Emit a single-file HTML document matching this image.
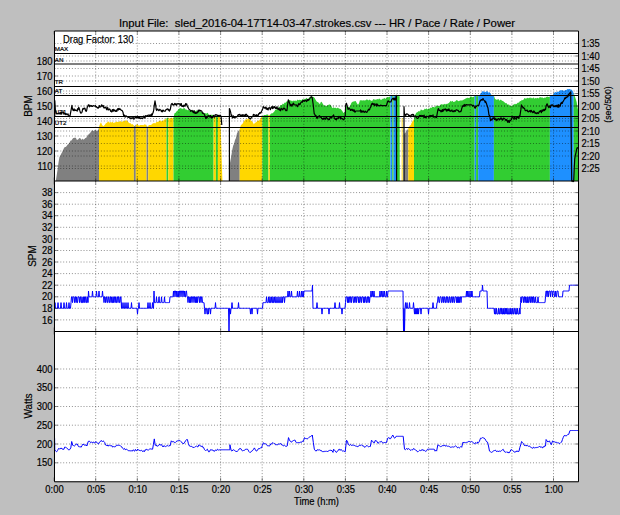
<!DOCTYPE html><html><head><meta charset="utf-8"><style>html,body{margin:0;padding:0;background:#bfbfbf;overflow:hidden}svg{display:block}</style></head><body><svg width="620" height="515" viewBox="0 0 620 515"><rect x="0" y="0" width="620" height="515" fill="#bfbfbf"/><rect x="54.5" y="31.0" width="524.0" height="150.0" fill="#fff"/><rect x="54.5" y="181.0" width="524.0" height="150.0" fill="#fff"/><rect x="54.5" y="331.0" width="524.0" height="150.0" fill="#fff"/><path d="M54.00 181.00 L54.00 181.00 L55.00 181.00 L55.80 181.00 L57.50 170.00 L58.45 163.05 L59.40 157.30 L60.30 155.84 L61.20 153.70 L62.10 152.29 L63.00 150.36 L63.90 148.24 L64.80 147.10 L65.64 146.91 L66.48 146.21 L67.32 144.96 L68.16 144.23 L69.00 143.50 L69.83 142.02 L70.67 140.61 L71.50 140.50 L72.40 139.02 L73.30 138.00 L74.15 137.90 L75.00 137.50 L75.95 137.92 L76.90 139.90 L78.10 139.48 L79.30 138.00 L80.10 138.15 L80.90 138.79 L81.70 139.90 L82.60 138.60 L83.50 139.85 L84.40 138.90 L85.30 138.00 L86.20 137.80 L87.10 136.46 L88.00 134.54 L88.90 134.50 L89.83 133.12 L90.75 132.35 L91.67 130.58 L92.60 130.20 L93.50 131.16 L94.40 130.26 L95.30 130.03 L96.20 130.80 L97.35 130.72 L98.50 129.50 L99.00 127.01 L99.00 181.00Z" fill="#808080"/><path d="M99.00 181.00 L99.00 127.00 L100.00 123.97 L101.00 122.30 L102.15 125.07 L103.30 126.30 L104.10 125.42 L104.90 124.79 L105.70 123.62 L106.50 123.07 L107.30 122.30 L108.10 121.74 L108.90 121.47 L109.70 122.96 L110.50 121.82 L111.30 122.80 L112.10 121.78 L112.90 122.30 L113.78 122.94 L114.65 122.61 L115.53 122.16 L116.40 121.50 L117.30 121.97 L118.20 121.65 L119.10 121.91 L120.00 120.82 L120.90 121.46 L121.80 122.09 L122.70 121.50 L123.50 120.56 L124.30 121.46 L125.10 121.00 L125.90 119.90 L126.97 120.77 L128.03 121.72 L129.10 123.00 L129.90 123.14 L130.70 123.24 L131.50 124.57 L132.30 123.90 L133.40 124.90 L133.90 125.53 L133.90 181.00Z" fill="#ffd700"/><path d="M133.90 181.00 L133.90 125.54 L134.50 126.30 L135.50 124.70 L135.80 124.73 L135.80 181.00Z" fill="#808080"/><path d="M135.80 181.00 L135.80 124.73 L136.50 124.80 L137.40 124.11 L138.30 125.27 L139.20 125.81 L140.10 124.95 L141.00 125.00 L141.83 124.90 L142.67 124.92 L143.50 125.20 L144.33 124.17 L145.17 124.78 L146.00 124.50 L146.60 125.50 L146.60 181.00Z" fill="#ffd700"/><path d="M146.60 181.00 L146.60 125.50 L147.50 127.00 L148.20 126.07 L148.20 181.00Z" fill="#808080"/><path d="M148.20 181.00 L148.20 126.07 L149.00 125.00 L149.80 125.00 L150.60 125.02 L151.40 124.70 L152.36 123.65 L153.32 123.15 L154.28 122.99 L155.24 123.55 L156.20 122.30 L157.10 121.80 L158.00 122.02 L158.90 121.27 L159.80 120.67 L160.70 120.38 L161.60 121.49 L162.50 120.70 L163.30 120.72 L164.10 119.51 L164.90 119.59 L165.70 119.10 L166.50 118.30 L166.50 181.00Z" fill="#ffd700"/><path d="M166.50 181.00 L166.50 118.30 L168.00 117.50 L168.30 117.75 L168.30 181.00Z" fill="#32cd32"/><path d="M168.30 181.00 L168.30 117.76 L169.00 118.35 L170.00 118.59 L171.00 117.90 L171.83 117.60 L172.67 118.51 L173.50 117.50 L173.50 181.00Z" fill="#ffd700"/><path d="M173.50 181.00 L173.50 117.50 L174.50 113.20 L175.44 113.09 L176.38 111.48 L177.32 111.07 L178.26 109.42 L179.20 108.50 L180.15 108.28 L181.10 108.04 L182.05 109.18 L183.00 108.50 L183.93 108.14 L184.85 108.22 L185.77 109.80 L186.70 109.50 L187.63 110.29 L188.57 110.07 L189.50 110.40 L190.44 111.19 L191.38 109.95 L192.32 110.50 L193.26 110.74 L194.20 111.30 L195.01 111.16 L195.83 110.71 L196.64 110.53 L197.46 111.01 L198.27 112.02 L199.09 112.17 L199.90 111.30 L200.83 112.06 L201.77 111.90 L202.70 111.80 L203.63 113.39 L204.57 112.93 L205.50 113.20 L206.33 113.82 L207.17 112.77 L208.00 113.32 L208.83 114.65 L209.67 114.79 L210.50 115.15 L211.33 114.86 L212.17 114.76 L213.00 115.10 L213.60 115.61 L213.60 181.00Z" fill="#32cd32"/><path d="M213.60 181.00 L213.60 115.61 L214.00 115.95 L215.00 116.50 L215.90 116.84 L215.90 181.00Z" fill="#ffd700"/><path d="M215.90 181.00 L215.90 116.84 L216.00 116.88 L217.00 116.00 L217.85 116.15 L217.90 116.21 L217.90 181.00Z" fill="#32cd32"/><path d="M217.90 181.00 L217.90 116.21 L218.70 117.06 L219.55 117.10 L220.40 118.00 L222.40 181.00 L223.00 181.00 L223.00 181.00Z" fill="#ffd700"/><path d="M229.00 181.00 L229.00 181.00 L229.50 181.00 L230.00 163.00 L231.10 156.98 L232.20 150.00 L233.13 145.79 L234.07 143.67 L235.00 140.00 L235.97 137.98 L236.93 133.48 L237.90 131.50 L238.80 130.52 L239.70 129.20 L239.70 181.00Z" fill="#808080"/><path d="M239.70 181.00 L239.70 129.20 L240.70 125.40 L241.62 124.48 L242.55 123.68 L243.47 122.03 L244.40 120.70 L245.35 119.56 L246.30 119.13 L247.25 119.43 L248.20 117.90 L249.13 119.56 L250.07 119.11 L251.00 120.70 L251.97 121.24 L252.93 122.50 L253.90 124.50 L254.83 122.71 L255.77 122.54 L256.70 121.70 L257.62 120.35 L258.55 120.96 L259.47 119.88 L260.40 118.90 L261.35 116.78 L262.30 116.00 L262.30 181.00Z" fill="#ffd700"/><path d="M262.30 181.00 L262.30 116.00 L263.20 115.77 L264.10 115.08 L265.00 115.10 L265.88 115.09 L266.75 114.60 L267.62 114.50 L268.50 115.10 L268.50 181.00Z" fill="#32cd32"/><path d="M268.50 181.00 L268.50 115.10 L269.90 115.01 L269.90 181.00Z" fill="#ffd700"/><path d="M269.90 181.00 L269.90 115.01 L270.00 115.00 L270.90 113.69 L271.80 113.30 L272.70 113.16 L273.60 112.13 L274.50 111.30 L275.38 109.53 L276.25 109.78 L277.12 109.12 L278.00 107.50 L278.80 107.45 L279.60 106.94 L280.40 104.99 L281.20 105.27 L282.00 104.80 L282.84 103.44 L283.69 104.13 L284.53 102.50 L285.37 102.89 L286.21 101.50 L287.06 101.73 L287.90 100.80 L288.74 100.46 L289.59 99.98 L290.43 100.60 L291.27 100.46 L292.11 101.52 L292.96 100.43 L293.80 100.80 L294.66 100.66 L295.51 100.60 L296.37 101.18 L297.23 99.51 L298.09 100.27 L298.94 99.96 L299.80 99.80 L300.64 100.08 L301.49 100.36 L302.33 99.03 L303.17 99.59 L304.01 99.13 L304.86 99.05 L305.70 98.80 L306.56 97.76 L307.43 98.87 L308.29 98.91 L309.15 97.54 L310.01 97.22 L310.88 98.19 L311.74 96.34 L312.60 96.80 L313.60 97.04 L314.60 98.03 L315.60 99.80 L316.48 101.21 L317.36 101.95 L318.24 102.23 L319.12 103.38 L320.00 104.00 L320.80 101.99 L321.60 101.70 L322.75 103.86 L323.90 105.50 L325.05 105.60 L326.20 105.90 L327.18 105.56 L328.15 104.95 L329.12 104.60 L330.10 104.40 L331.25 105.86 L332.40 108.30 L333.32 107.35 L334.23 107.91 L335.15 107.44 L336.07 108.13 L336.98 108.20 L337.90 107.50 L338.85 108.58 L339.80 108.77 L340.75 109.05 L341.70 110.20 L342.50 111.34 L343.30 112.90 L344.25 112.28 L345.20 111.70 L346.40 105.50 L347.20 106.54 L348.00 107.10 L349.15 107.13 L350.30 105.50 L351.45 102.85 L352.60 101.70 L353.63 101.40 L354.67 101.15 L355.70 100.90 L356.85 103.24 L358.00 104.80 L359.00 103.15 L360.00 100.10 L360.84 100.57 L361.69 100.26 L362.53 100.47 L363.38 100.27 L364.22 100.58 L365.07 100.26 L365.91 100.20 L366.76 99.37 L367.60 99.80 L368.40 100.55 L369.20 99.59 L370.00 100.01 L370.80 100.38 L371.60 100.63 L372.40 100.68 L373.20 98.91 L374.00 99.46 L374.80 99.46 L375.60 99.80 L376.48 99.49 L377.36 98.94 L378.23 99.56 L379.11 98.60 L379.99 98.89 L380.87 99.93 L381.74 99.46 L382.62 98.84 L383.50 98.80 L384.34 97.81 L385.19 99.05 L386.03 98.31 L386.87 97.13 L387.71 97.07 L388.56 97.34 L389.40 96.80 L390.20 96.63 L390.40 96.42 L390.40 181.00Z" fill="#32cd32"/><path d="M390.40 181.00 L390.40 96.42 L391.00 95.80 L392.00 95.47 L392.30 95.63 L392.30 181.00Z" fill="#1e90ff"/><path d="M392.30 181.00 L392.30 95.63 L393.00 96.00 L393.60 96.31 L393.60 181.00Z" fill="#32cd32"/><path d="M393.60 181.00 L393.60 96.31 L394.00 96.51 L395.00 95.40 L396.00 95.13 L396.60 95.35 L396.60 181.00Z" fill="#1e90ff"/><path d="M396.60 181.00 L396.60 95.35 L397.00 95.50 L397.87 95.22 L398.73 96.46 L399.60 96.00 L399.80 180.58 L399.80 181.00Z" fill="#32cd32"/><path d="M401.70 181.00 L401.70 118.00 L402.60 118.00 L402.60 181.00Z" fill="#ffd700"/><path d="M404.00 181.00 L404.00 134.50 L404.86 132.66 L405.72 132.39 L406.58 130.30 L407.44 129.80 L408.30 128.40 L408.30 181.00Z" fill="#808080"/><path d="M408.30 181.00 L408.30 128.40 L409.11 126.66 L409.93 125.50 L410.74 125.16 L411.56 122.97 L412.37 121.57 L413.19 120.55 L414.00 119.00 L414.00 181.00Z" fill="#ffd700"/><path d="M414.00 181.00 L414.00 119.00 L414.85 115.96 L415.70 113.70 L416.54 112.54 L417.39 112.35 L418.23 111.58 L419.07 110.85 L419.91 111.67 L420.76 109.43 L421.60 109.70 L422.40 110.16 L423.20 110.28 L424.00 109.77 L424.80 108.43 L425.60 109.20 L426.40 108.27 L427.20 109.19 L428.00 109.26 L428.80 108.33 L429.60 108.70 L430.48 107.48 L431.36 108.11 L432.23 106.97 L433.11 107.02 L433.99 106.95 L434.87 107.41 L435.74 106.13 L436.62 105.38 L437.50 105.70 L438.35 106.04 L439.20 105.90 L440.05 105.18 L440.90 104.13 L441.75 104.19 L442.60 104.39 L443.45 104.46 L444.30 103.69 L445.15 104.53 L446.00 103.80 L446.98 103.92 L447.95 103.57 L448.92 102.99 L449.90 101.80 L450.78 100.82 L451.66 101.73 L452.53 100.71 L453.41 102.07 L454.29 101.69 L455.17 101.60 L456.04 100.46 L456.92 100.12 L457.80 100.80 L458.66 101.22 L459.51 100.71 L460.37 100.59 L461.23 100.18 L462.09 100.63 L462.94 99.65 L463.80 99.80 L464.77 98.89 L465.75 98.54 L466.73 97.94 L467.70 97.80 L468.56 97.89 L469.41 98.22 L470.27 96.60 L471.13 96.45 L471.99 97.11 L472.84 97.26 L473.70 96.80 L474.70 96.03 L474.70 181.00Z" fill="#32cd32"/><path d="M474.70 181.00 L474.70 96.03 L475.00 95.80 L476.00 95.59 L476.10 95.68 L476.10 181.00Z" fill="#1e90ff"/><path d="M476.10 181.00 L476.10 95.68 L477.00 96.50 L477.87 95.85 L478.20 95.62 L478.20 181.00Z" fill="#32cd32"/><path d="M478.20 181.00 L478.20 95.62 L478.73 95.24 L479.60 95.80 L480.60 93.33 L481.60 92.52 L482.60 90.90 L483.60 91.56 L484.60 91.84 L485.60 91.90 L486.58 91.28 L487.55 91.19 L488.52 92.68 L489.50 91.90 L490.50 93.47 L491.50 94.90 L492.70 95.19 L493.90 95.80 L493.90 181.00Z" fill="#1e90ff"/><path d="M493.90 181.00 L493.90 95.80 L495.00 98.80 L495.88 99.39 L496.75 99.71 L497.62 99.59 L498.50 99.04 L499.38 100.64 L500.25 99.78 L501.12 99.72 L502.00 100.80 L502.95 101.03 L503.90 101.80 L504.76 102.42 L505.61 103.15 L506.47 102.88 L507.33 104.41 L508.19 104.57 L509.04 104.53 L509.90 105.70 L510.74 106.06 L511.59 105.71 L512.43 105.62 L513.27 104.94 L514.11 103.83 L514.96 104.57 L515.80 103.80 L516.66 103.95 L517.51 102.72 L518.37 102.82 L519.23 102.36 L520.09 100.75 L520.94 101.17 L521.80 99.80 L522.64 100.30 L523.49 99.76 L524.33 98.06 L525.17 98.39 L526.01 98.58 L526.86 98.28 L527.70 97.80 L528.53 98.26 L529.35 98.06 L530.18 97.19 L531.00 98.58 L531.83 97.87 L532.65 98.49 L533.48 97.27 L534.30 98.70 L535.12 97.90 L535.95 98.30 L536.77 98.23 L537.60 97.80 L538.48 98.49 L539.36 97.55 L540.23 97.05 L541.11 97.63 L541.99 97.22 L542.87 97.87 L543.74 98.37 L544.62 97.55 L545.50 97.80 L546.38 96.88 L547.26 96.43 L548.14 96.88 L549.02 96.90 L549.90 96.50 L549.90 181.00Z" fill="#32cd32"/><path d="M549.90 181.00 L549.90 96.50 L550.90 95.30 L551.90 95.80 L552.88 95.12 L553.85 93.33 L554.82 92.17 L555.80 91.90 L556.60 92.47 L557.40 91.54 L558.20 92.01 L559.00 91.13 L559.80 90.90 L560.64 90.08 L561.49 90.15 L562.33 90.34 L563.17 90.58 L564.01 90.67 L564.86 90.50 L565.70 89.90 L566.50 89.97 L567.30 89.06 L568.10 89.17 L568.90 88.88 L569.70 88.90 L570.70 89.55 L571.70 89.81 L572.70 90.90 L573.70 93.21 L573.70 181.00Z" fill="#1e90ff"/><path d="M573.70 181.00 L573.70 93.21 L574.00 93.90 L574.87 96.60 L575.73 99.09 L576.60 101.80 L578.00 109.99 L578.00 181.00Z" fill="#32cd32"/><path d="M95.7 31.0V181.0 M95.7 181.0V331.0 M95.7 331.0V481.0 M137.3 31.0V181.0 M137.3 181.0V331.0 M137.3 331.0V481.0 M178.9 31.0V181.0 M178.9 181.0V331.0 M178.9 331.0V481.0 M220.6 31.0V181.0 M220.6 181.0V331.0 M220.6 331.0V481.0 M262.2 31.0V181.0 M262.2 181.0V331.0 M262.2 331.0V481.0 M303.8 31.0V181.0 M303.8 181.0V331.0 M303.8 331.0V481.0 M345.4 31.0V181.0 M345.4 181.0V331.0 M345.4 331.0V481.0 M387.0 31.0V181.0 M387.0 181.0V331.0 M387.0 331.0V481.0 M428.6 31.0V181.0 M428.6 181.0V331.0 M428.6 331.0V481.0 M470.3 31.0V181.0 M470.3 181.0V331.0 M470.3 331.0V481.0 M511.9 31.0V181.0 M511.9 181.0V331.0 M511.9 331.0V481.0 M553.5 31.0V181.0 M553.5 181.0V331.0 M553.5 331.0V481.0 M54.5 166.0H578.5 M54.5 151.0H578.5 M54.5 136.0H578.5 M54.5 121.0H578.5 M54.5 106.0H578.5 M54.5 91.0H578.5 M54.5 76.0H578.5 M54.5 61.0H578.5 M54.5 43.5H578.5 M54.5 56.0H578.5 M54.5 68.5H578.5 M54.5 81.0H578.5 M54.5 93.5H578.5 M54.5 106.0H578.5 M54.5 118.5H578.5 M54.5 131.0H578.5 M54.5 143.5H578.5 M54.5 156.0H578.5 M54.5 168.5H578.5 M54.5 319.9H578.5 M54.5 308.3H578.5 M54.5 296.8H578.5 M54.5 285.2H578.5 M54.5 273.6H578.5 M54.5 262.0H578.5 M54.5 250.5H578.5 M54.5 238.9H578.5 M54.5 227.3H578.5 M54.5 215.7H578.5 M54.5 204.2H578.5 M54.5 192.6H578.5 M54.5 462.8H578.5 M54.5 444.0H578.5 M54.5 425.2H578.5 M54.5 406.5H578.5 M54.5 387.8H578.5 M54.5 369.0H578.5" stroke="#000" stroke-opacity="0.55" stroke-width="0.8" stroke-dasharray="1 1.9" fill="none"/><path d="M54.5 53.5H578.5 M54.5 64.0H578.5 M54.5 86.5H578.5 M54.5 95.5H578.5 M54.5 116.5H578.5 M54.5 127.5H578.5" stroke="#000" stroke-width="1" fill="none"/><g font-family='"Liberation Sans", sans-serif' font-size="6.2" fill="#000" stroke="#000" stroke-width="0.2"><text x="54.8" y="51.3">MAX</text><text x="54.8" y="61.8">AN</text><text x="54.8" y="84.3">TR</text><text x="54.8" y="93.3">AT</text><text x="54.8" y="114.3">UT1</text><text x="54.8" y="125.3">UT2</text></g><path d="M54.8 117.0 L54.8 100.5 L55.4 110.2 L55.9 110.8 L56.4 112.9 L56.9 114.1 L57.5 113.4 L58.2 113.8 L58.8 113.2 L59.4 113.9 L60.1 112.6 L60.7 114.1 L61.2 112.3 L61.7 114.1 L62.2 112.0 L62.7 112.2 L63.3 111.8 L64.0 114.3 L64.6 113.2 L65.1 113.3 L65.6 114.6 L66.1 113.8 L66.6 114.1 L67.2 114.8 L67.9 113.8 L68.5 115.1 L69.0 115.8 L69.5 116.7 L70.0 116.0 L70.7 112.2 L71.4 108.3 L71.9 105.4 L72.4 108.5 L72.9 110.2 L73.5 110.6 L74.1 108.8 L74.7 110.6 L75.3 109.8 L75.9 110.5 L76.6 110.2 L77.2 111.2 L77.7 108.6 L78.2 109.6 L78.7 107.3 L79.3 108.7 L79.9 110.9 L80.5 112.8 L81.1 113.2 L81.6 112.6 L82.1 111.9 L82.6 109.2 L83.1 108.3 L83.7 109.1 L84.4 108.1 L85.0 108.3 L85.5 110.5 L86.0 111.3 L86.5 111.2 L87.2 107.4 L87.9 105.9 L88.4 104.8 L88.9 104.9 L89.4 106.8 L89.9 105.4 L90.4 105.5 L91.0 106.3 L91.5 105.6 L92.0 106.4 L92.6 106.3 L93.1 105.8 L93.7 105.6 L94.3 106.1 L94.8 106.0 L95.4 105.6 L95.9 107.0 L96.5 106.6 L97.0 107.6 L97.5 107.7 L98.1 108.3 L98.6 107.2 L99.1 107.3 L99.6 105.5 L100.2 107.0 L100.7 106.9 L101.2 106.3 L101.7 104.8 L102.2 105.5 L102.8 106.5 L103.3 105.6 L103.8 107.9 L104.4 107.7 L104.9 108.0 L105.4 107.5 L106.0 107.0 L106.5 109.4 L107.0 109.9 L107.6 107.5 L108.1 108.8 L108.6 110.0 L109.2 109.3 L109.7 109.0 L110.2 109.8 L110.8 111.5 L111.3 111.1 L111.8 112.0 L112.3 109.6 L112.8 111.1 L113.3 109.4 L113.8 111.1 L114.3 109.9 L114.8 110.3 L115.3 111.3 L115.8 111.5 L116.4 110.0 L116.9 111.3 L117.4 109.3 L117.9 108.6 L118.5 110.0 L119.0 108.3 L119.5 109.5 L120.1 108.9 L120.7 109.6 L121.3 110.4 L121.9 110.3 L122.4 110.9 L123.0 112.2 L123.5 115.1 L124.0 116.3 L124.5 115.0 L125.0 117.0 L125.5 117.0 L126.0 115.8 L126.5 116.2 L127.0 116.6 L127.5 116.7 L128.0 117.3 L128.6 117.3 L129.1 117.4 L129.6 117.7 L130.2 118.8 L130.7 117.8 L131.2 117.8 L131.8 118.7 L132.3 118.3 L132.8 117.5 L133.4 117.6 L133.9 119.4 L134.4 118.0 L135.0 118.0 L135.5 116.4 L136.0 117.4 L136.6 117.8 L137.1 117.5 L137.6 116.2 L138.1 118.0 L138.7 118.1 L139.2 116.6 L139.7 118.3 L140.2 117.9 L140.8 118.6 L141.3 117.8 L141.8 118.3 L142.3 118.6 L142.9 118.4 L143.4 116.2 L143.9 116.0 L144.5 117.5 L145.0 118.0 L145.5 115.7 L146.1 116.0 L146.6 115.9 L147.1 116.1 L147.6 115.3 L148.1 115.3 L148.6 115.1 L149.1 115.2 L149.7 115.7 L150.2 114.8 L150.7 115.0 L151.2 116.0 L151.7 113.8 L152.2 115.1 L152.7 113.4 L153.3 112.0 L153.8 109.5 L154.4 104.6 L155.0 100.8 L155.6 104.4 L156.2 109.5 L156.7 110.5 L157.2 109.0 L157.8 109.0 L158.3 109.9 L158.8 110.7 L159.3 110.3 L159.8 109.3 L160.4 110.0 L160.9 110.1 L161.4 111.6 L162.0 110.6 L162.5 111.8 L163.0 110.0 L163.6 110.6 L164.1 111.1 L164.7 111.0 L165.4 111.1 L166.0 109.5 L166.5 109.5 L167.1 109.0 L167.6 108.8 L168.2 110.1 L168.7 109.3 L169.3 111.1 L169.8 110.4 L170.4 109.1 L171.0 105.1 L171.6 103.8 L172.1 103.3 L172.7 104.9 L173.2 104.6 L173.8 105.2 L174.3 104.0 L174.9 103.5 L175.4 104.7 L175.9 104.0 L176.5 105.3 L177.0 103.7 L177.6 103.8 L178.1 103.8 L178.7 103.7 L179.2 103.8 L179.7 103.8 L180.3 105.5 L180.8 103.7 L181.3 103.5 L181.8 106.4 L182.4 106.5 L182.9 105.7 L183.4 106.8 L184.0 105.0 L184.5 106.1 L185.1 105.8 L185.6 103.6 L186.2 104.8 L186.7 103.8 L187.3 106.3 L188.0 107.4 L188.6 108.5 L189.2 109.5 L189.9 109.8 L190.5 111.3 L191.0 110.9 L191.5 110.7 L192.0 110.4 L192.5 111.9 L193.0 111.2 L193.6 112.7 L194.1 110.7 L194.6 113.2 L195.1 112.7 L195.6 113.4 L196.1 112.3 L196.6 113.2 L197.1 113.0 L197.7 111.9 L198.2 110.1 L198.7 111.9 L199.2 110.1 L199.8 110.3 L200.3 111.1 L200.8 110.4 L201.4 111.0 L201.9 111.3 L202.5 113.3 L203.0 113.0 L203.6 113.2 L204.2 114.3 L204.9 115.6 L205.5 117.9 L206.0 118.6 L206.6 117.3 L207.1 117.9 L207.7 116.4 L208.2 115.7 L208.8 116.4 L209.3 116.0 L209.8 117.0 L210.4 115.4 L210.9 117.2 L211.4 117.8 L211.9 117.6 L212.5 117.8 L213.0 117.0 L213.5 115.3 L214.1 116.8 L214.6 117.2 L215.2 114.7 L215.7 115.0 L216.3 114.7 L216.8 115.1 L217.4 115.4 L217.9 115.2 L218.5 115.6 L219.0 116.6 L219.6 116.0 L220.1 115.1 L220.7 115.8 L221.2 117.5 L221.8 125.0 M229.4 181.0 L229.4 108.5 L230.0 110.0 L230.7 112.4 L231.3 116.0 L231.8 115.1 L232.4 117.9 L232.9 117.8 L233.4 115.9 L233.9 117.4 L234.5 117.1 L235.0 117.9 L235.5 117.0 L236.1 116.7 L236.6 117.1 L237.2 116.5 L237.7 115.5 L238.3 114.6 L238.8 115.1 L239.3 114.7 L239.9 114.3 L240.4 115.6 L241.0 116.2 L241.5 115.4 L242.1 114.7 L242.6 116.0 L243.1 114.8 L243.7 115.1 L244.2 115.5 L244.7 115.8 L245.2 114.4 L245.8 115.3 L246.3 114.2 L246.8 115.2 L247.4 115.4 L247.9 115.9 L248.5 116.9 L249.0 118.1 L249.6 118.0 L250.1 118.9 L250.6 118.9 L251.2 117.7 L251.7 116.6 L252.3 116.8 L252.8 116.7 L253.4 114.4 L253.9 115.1 L254.4 114.9 L255.0 114.9 L255.5 116.2 L256.0 116.3 L256.5 114.7 L257.1 116.2 L257.6 115.1 L258.2 115.5 L258.7 113.7 L259.3 113.9 L259.8 112.5 L260.4 113.2 L261.0 112.8 L261.6 111.0 L262.1 110.3 L262.7 108.7 L263.3 106.6 L263.8 107.5 L264.4 108.1 L264.9 108.0 L265.4 107.1 L265.9 108.9 L266.5 107.7 L267.0 109.5 L267.5 108.4 L268.1 110.0 L268.6 107.8 L269.2 107.8 L269.7 107.7 L270.3 109.7 L270.8 108.5 L271.3 107.3 L271.9 106.6 L272.4 108.6 L272.9 106.4 L273.4 108.1 L274.0 107.4 L274.5 106.6 L275.0 107.8 L275.5 108.4 L276.0 107.7 L276.5 108.6 L277.0 106.7 L277.5 109.0 L278.0 108.6 L278.5 109.5 L279.0 108.0 L279.5 110.1 L280.0 109.7 L280.6 110.8 L281.1 108.2 L281.7 108.8 L282.2 109.3 L282.8 109.9 L283.3 108.1 L283.9 108.7 L284.4 108.1 L284.9 108.7 L285.4 110.0 L285.9 110.7 L286.4 110.1 L286.9 110.7 L287.6 104.9 L288.3 99.8 L288.8 101.0 L289.3 102.3 L289.8 104.0 L290.3 105.7 L290.8 104.3 L291.3 105.2 L291.8 106.2 L292.3 104.4 L292.8 105.0 L293.3 103.1 L293.8 103.8 L294.3 104.6 L294.8 105.0 L295.3 105.0 L295.8 104.8 L296.3 104.9 L296.8 105.6 L297.3 106.6 L297.8 105.7 L298.4 104.2 L298.9 103.5 L299.5 104.7 L300.0 104.6 L300.6 103.0 L301.1 102.2 L301.7 101.8 L302.2 102.3 L302.7 100.7 L303.2 100.8 L303.7 100.5 L304.2 101.4 L304.7 100.5 L305.2 100.2 L305.7 100.8 L306.2 101.1 L306.7 101.6 L307.2 99.5 L307.7 100.4 L308.2 99.3 L308.7 100.3 L309.2 99.3 L309.7 98.8 L310.2 97.9 L310.7 97.4 L311.2 96.6 L311.7 97.6 L312.2 97.4 L312.7 101.1 L313.2 104.6 L313.7 109.2 L314.2 113.7 L314.8 114.2 L315.4 116.4 L316.0 115.6 L316.6 117.6 L317.1 118.6 L317.6 116.9 L318.1 116.9 L318.6 116.2 L319.1 116.9 L319.6 115.6 L320.1 117.1 L320.7 117.0 L321.2 117.4 L321.8 118.7 L322.3 118.7 L322.9 119.5 L323.5 118.1 L324.1 118.8 L324.7 118.0 L325.2 119.4 L325.7 118.1 L326.2 117.6 L326.8 117.7 L327.3 119.2 L327.8 118.7 L328.4 119.1 L328.9 119.8 L329.5 119.4 L330.0 117.6 L330.6 117.3 L331.1 117.4 L331.7 118.0 L332.3 116.1 L333.0 116.5 L333.6 114.9 L334.2 117.4 L334.9 119.1 L335.5 119.5 L336.1 118.5 L336.6 119.9 L337.2 118.0 L337.7 118.0 L338.3 118.5 L338.8 116.4 L339.4 117.2 L340.0 116.4 L340.5 118.9 L341.1 117.7 L341.7 118.7 L342.3 118.5 L342.9 119.3 L343.5 119.8 L344.1 119.5 L344.6 116.6 L345.2 116.4 L345.6 105.5 L346.4 103.2 L346.9 104.8 L347.5 107.2 L348.0 109.4 L348.5 109.1 L349.0 108.1 L349.5 108.6 L350.0 109.2 L350.5 110.5 L351.1 109.3 L351.6 110.1 L352.1 109.2 L352.6 110.6 L353.1 110.0 L353.6 111.2 L354.1 109.7 L354.7 112.0 L355.2 112.1 L355.7 111.0 L356.2 111.0 L356.8 111.0 L357.3 111.0 L357.9 111.0 L358.4 111.0 L358.9 111.0 L359.5 111.0 L360.0 111.0 L360.5 109.9 L361.0 112.4 L361.6 110.8 L362.1 112.0 L362.6 112.0 L363.1 110.8 L363.6 111.9 L364.1 111.9 L364.7 112.4 L365.2 111.0 L365.7 111.7 L366.3 112.1 L366.8 112.4 L367.4 111.3 L367.9 110.7 L368.5 109.2 L369.0 110.0 L369.6 109.7 L370.1 107.8 L370.6 107.4 L371.1 105.8 L371.6 103.8 L372.1 104.1 L372.6 103.2 L373.1 104.6 L373.6 104.7 L374.1 103.5 L374.6 105.6 L375.1 105.1 L375.6 104.8 L376.1 103.8 L376.7 106.2 L377.2 104.0 L377.7 104.7 L378.3 105.8 L378.8 105.6 L379.4 105.5 L379.9 105.9 L380.4 105.4 L381.0 105.1 L381.5 105.7 L382.0 105.7 L382.5 105.7 L383.0 105.7 L383.5 105.7 L384.0 105.7 L384.5 105.7 L385.0 105.7 L385.5 105.7 L386.0 105.7 L386.5 105.7 L387.1 103.2 L387.8 101.2 L388.4 100.8 L388.9 101.7 L389.4 102.1 L389.9 101.8 L390.4 102.0 L391.0 101.9 L391.5 100.1 L392.1 99.1 L392.6 98.6 L393.2 98.2 L393.8 99.9 L394.5 98.2 L395.1 100.1 L395.8 97.8 L396.4 95.4 L396.6 181.0 M404.0 181.0 L404.0 106.7 L404.5 115.2 L405.1 114.3 L405.7 115.6 L406.2 114.2 L406.8 113.9 L407.4 114.2 L408.0 114.3 L408.5 115.1 L409.1 116.1 L409.6 115.3 L410.2 116.1 L410.8 116.9 L411.3 114.7 L411.9 114.9 L412.4 114.3 L413.0 115.2 L413.5 114.5 L414.1 116.8 L414.6 117.0 L415.2 115.9 L415.7 116.3 L416.3 117.4 L416.8 118.0 L417.3 118.4 L417.9 118.3 L418.4 117.7 L418.9 117.0 L419.5 115.4 L420.0 116.1 L420.5 115.9 L421.0 115.3 L421.5 116.3 L422.0 116.5 L422.5 115.5 L423.1 115.7 L423.6 117.2 L424.1 115.1 L424.6 117.4 L425.1 117.6 L425.6 116.6 L426.1 117.8 L426.7 116.1 L427.2 116.5 L427.7 116.5 L428.3 116.5 L428.8 117.4 L429.4 116.5 L429.9 115.3 L430.4 116.8 L431.0 115.6 L431.5 115.6 L432.0 116.1 L432.5 116.6 L433.0 114.8 L433.5 117.2 L434.0 117.1 L434.5 116.8 L435.0 117.1 L435.5 117.1 L436.0 116.5 L436.5 117.6 L437.2 113.7 L437.9 109.7 L438.4 108.5 L438.9 110.0 L439.4 110.5 L439.9 110.1 L440.4 110.6 L440.9 111.8 L441.4 110.7 L441.9 111.7 L442.4 109.5 L442.9 111.3 L443.4 110.7 L443.9 109.1 L444.4 109.8 L444.9 109.4 L445.4 108.9 L445.9 110.1 L446.4 111.1 L446.9 109.4 L447.4 110.8 L447.9 109.7 L448.4 110.3 L448.9 108.8 L449.4 111.0 L449.9 110.3 L450.4 111.3 L450.9 110.8 L451.4 111.0 L451.9 109.9 L452.4 111.3 L452.9 111.7 L453.4 111.6 L453.9 110.7 L454.4 110.6 L455.0 111.6 L455.5 110.9 L456.0 109.9 L456.6 109.8 L457.1 110.0 L457.6 110.4 L458.1 110.4 L458.7 111.4 L459.2 112.0 L459.7 111.7 L460.3 111.4 L460.8 111.7 L461.3 110.6 L461.8 108.2 L462.3 107.1 L462.8 105.7 L463.3 106.3 L463.8 105.2 L464.3 104.5 L464.8 106.4 L465.3 105.8 L465.8 104.7 L466.3 104.6 L466.8 104.8 L467.3 104.8 L467.9 104.8 L468.4 104.8 L469.0 104.8 L469.5 104.8 L470.1 104.8 L470.6 104.8 L471.2 104.8 L471.7 104.8 L472.2 105.4 L472.7 106.0 L473.2 105.5 L473.7 105.3 L474.2 106.4 L474.7 107.7 L475.3 108.2 L475.8 106.1 L476.4 106.7 L476.9 105.7 L477.5 105.5 L478.0 105.1 L478.6 105.7 L479.1 104.2 L479.6 102.3 L480.1 100.7 L480.6 100.8 L481.1 99.5 L481.6 99.5 L482.1 100.3 L482.6 98.9 L483.1 98.6 L483.6 99.8 L484.1 100.3 L484.6 100.9 L485.1 102.4 L485.6 101.2 L486.1 102.9 L486.6 103.8 L487.2 106.1 L487.9 107.7 L488.5 111.7 L489.0 115.2 L489.5 115.4 L490.0 117.2 L490.5 120.6 L491.0 120.2 L491.5 119.0 L492.0 119.9 L492.5 118.8 L493.0 117.9 L493.5 118.6 L494.1 117.5 L494.6 119.5 L495.2 118.4 L495.7 120.0 L496.3 119.2 L496.8 120.7 L497.4 119.6 L497.9 118.9 L498.4 118.7 L498.9 118.6 L499.4 120.0 L500.0 119.4 L500.5 118.5 L501.0 117.7 L501.5 119.2 L502.0 118.6 L502.6 120.2 L503.1 119.4 L503.7 118.1 L504.2 118.4 L504.8 118.9 L505.3 119.4 L505.9 120.6 L506.4 119.5 L506.9 119.7 L507.4 121.5 L507.9 122.4 L508.4 120.6 L508.9 121.6 L509.4 122.3 L509.9 120.2 L510.4 120.5 L510.9 120.1 L511.4 119.5 L511.9 117.6 L512.5 116.4 L513.0 117.3 L513.6 118.3 L514.1 119.4 L514.7 117.2 L515.2 117.9 L515.8 118.6 L516.3 119.3 L516.8 117.0 L517.3 117.5 L517.8 117.1 L518.3 117.9 L518.8 118.3 L519.3 115.9 L519.8 116.6 L520.3 113.3 L520.9 109.4 L521.4 104.8 L521.9 106.5 L522.5 106.4 L523.0 108.2 L523.5 107.4 L524.1 108.2 L524.6 108.5 L525.2 110.7 L525.7 110.7 L526.2 110.7 L526.7 110.2 L527.2 110.0 L527.7 111.7 L528.2 111.4 L528.7 111.8 L529.2 111.0 L529.7 111.3 L530.2 110.5 L530.7 112.1 L531.2 110.3 L531.7 111.7 L532.2 111.7 L532.8 112.6 L533.3 112.5 L533.8 110.9 L534.4 111.4 L534.9 113.2 L535.5 112.7 L536.0 113.5 L536.5 113.6 L537.1 112.5 L537.6 112.7 L538.1 113.6 L538.7 113.0 L539.2 111.7 L539.7 111.6 L540.3 110.6 L540.8 111.3 L541.4 112.7 L541.9 110.1 L542.4 111.3 L543.0 109.8 L543.5 110.7 L544.0 109.3 L544.5 110.6 L545.0 109.2 L545.5 109.7 L546.0 106.5 L546.6 104.8 L547.1 103.8 L547.7 105.5 L548.3 106.6 L548.9 107.7 L549.4 105.8 L549.9 106.0 L550.4 107.6 L550.9 105.0 L551.4 105.5 L551.9 104.8 L552.5 104.8 L553.0 106.1 L553.6 105.9 L554.1 106.7 L554.7 106.3 L555.2 105.6 L555.8 106.7 L556.3 105.7 L556.8 105.3 L557.3 107.2 L557.8 105.1 L558.3 104.7 L558.8 107.3 L559.3 105.0 L559.8 105.7 L560.3 106.2 L560.8 103.2 L561.3 103.7 L561.8 102.3 L562.3 103.4 L562.8 101.8 L563.3 101.1 L563.8 100.2 L564.3 99.5 L564.8 97.8 L565.4 98.6 L566.0 97.0 L566.5 97.5 L567.1 96.8 L567.7 96.8 L568.2 94.7 L568.7 95.8 L569.2 94.1 L569.7 92.9 L570.2 93.3 L570.7 91.9 L571.2 135.6 L571.7 181.0 L572.2 181.1 L572.7 180.9 L573.2 181.6 L573.7 181.0 L574.2 168.9 L574.7 159.2 L575.3 155.5 L576.0 152.6 L576.6 149.3 L577.3 147.6 L578.0 148.3" fill="none" stroke="#000" stroke-width="1.2" stroke-linejoin="round"/><path d="M54.6 438.2 L54.8 450.0 L55.7 451.1 L56.6 451.8 L57.5 450.6 L58.5 448.5 L59.4 448.8 L60.2 448.9 L61.1 447.9 L62.0 449.0 L63.0 449.2 L63.9 449.3 L64.7 447.1 L65.6 447.3 L66.5 447.8 L67.5 448.5 L68.5 449.9 L69.5 449.8 L70.8 447.9 L71.7 441.5 L72.7 445.3 L73.6 445.6 L74.4 446.0 L75.3 445.3 L76.2 444.0 L77.2 444.0 L78.5 446.6 L79.4 446.8 L80.2 446.6 L81.1 447.3 L82.0 445.7 L83.0 444.0 L84.0 444.8 L85.0 445.3 L86.0 444.8 L86.9 446.0 L88.2 441.5 L89.0 441.1 L89.8 441.4 L90.6 442.7 L91.4 442.1 L92.3 442.8 L93.1 441.9 L94.0 442.7 L94.9 443.0 L95.7 441.6 L96.6 442.1 L97.5 443.3 L98.5 444.0 L99.5 442.1 L100.5 441.5 L101.3 440.4 L102.2 441.7 L103.0 440.8 L103.8 441.4 L104.7 442.5 L105.5 445.0 L106.3 445.3 L107.1 446.0 L107.9 444.9 L108.7 446.1 L109.5 445.3 L110.3 445.6 L111.1 446.1 L111.8 445.5 L112.6 447.1 L113.4 446.6 L114.2 446.7 L114.9 446.9 L115.7 446.5 L116.4 445.2 L117.2 445.3 L118.0 445.3 L118.8 445.2 L119.5 445.4 L120.3 445.6 L121.1 446.6 L122.0 447.1 L122.8 448.5 L123.7 449.2 L124.5 448.4 L125.2 449.8 L126.0 449.3 L126.7 449.3 L127.5 449.8 L128.4 450.8 L129.2 450.6 L130.1 451.1 L130.9 450.6 L131.6 450.8 L132.4 451.1 L133.1 449.8 L133.9 450.5 L134.7 451.2 L135.4 449.4 L136.2 450.6 L136.9 450.7 L137.7 449.0 L138.4 449.8 L139.2 450.7 L139.9 450.2 L140.7 450.9 L141.4 450.2 L142.2 450.7 L142.9 451.8 L143.7 450.7 L144.5 451.6 L145.2 449.7 L146.0 450.2 L146.8 449.2 L147.7 450.0 L148.5 450.0 L149.4 449.2 L150.2 448.9 L151.0 448.9 L151.8 449.2 L152.6 449.2 L153.4 444.5 L154.3 438.9 L155.2 445.3 L156.0 444.8 L156.9 446.2 L157.7 446.0 L158.7 445.5 L159.7 444.0 L160.6 445.3 L161.4 444.5 L162.3 446.0 L163.1 447.0 L163.9 445.6 L164.7 446.2 L165.5 446.6 L166.4 446.1 L167.4 445.3 L168.3 446.3 L169.1 445.5 L170.0 446.0 L171.3 440.8 L172.2 441.9 L173.2 441.5 L174.2 442.2 L175.2 442.7 L176.0 441.7 L176.9 441.1 L177.7 440.8 L178.5 440.4 L179.3 440.4 L180.2 440.7 L181.0 441.5 L181.9 442.8 L182.9 443.4 L183.9 443.6 L184.8 442.1 L185.7 440.6 L186.5 439.6 L187.4 439.5 L188.4 443.6 L189.4 446.0 L190.2 446.3 L190.9 446.4 L191.7 446.3 L192.4 447.2 L193.2 447.3 L194.0 447.7 L194.8 446.9 L195.5 446.7 L196.3 445.9 L197.1 446.6 L198.0 446.9 L198.8 444.9 L199.7 445.3 L200.5 445.7 L201.2 446.7 L202.0 445.8 L202.7 447.3 L203.5 447.3 L204.5 449.7 L205.5 450.5 L206.4 450.1 L207.4 449.2 L208.6 451.8 L209.5 451.7 L210.3 449.8 L211.2 449.8 L212.0 450.1 L212.9 450.0 L213.7 451.1 L214.5 451.3 L215.3 450.0 L216.0 449.9 L216.8 450.5 L217.6 449.2 L218.6 450.1 L219.5 449.8 L220.2 449.8 L220.9 449.8 L221.7 449.8 L222.4 449.8 L223.2 449.8 L223.9 449.8 L224.7 449.8 L225.4 449.8 L226.2 449.8 L226.9 449.8 L227.7 449.8 L228.4 449.8 L229.2 449.8 L229.9 449.8 L229.9 444.7 L231.2 450.5 L232.0 451.1 L232.9 449.9 L233.7 449.8 L234.5 450.3 L235.3 451.2 L236.2 451.3 L237.0 451.8 L237.8 450.6 L238.6 450.0 L239.4 448.7 L240.2 448.5 L241.0 448.8 L241.8 450.4 L242.6 450.8 L243.4 450.5 L244.2 450.4 L245.0 449.8 L245.8 449.2 L246.6 449.2 L247.4 449.1 L248.2 450.1 L248.9 451.6 L249.7 452.4 L250.5 452.4 L251.3 451.3 L252.1 451.1 L252.8 450.2 L253.6 449.2 L254.4 447.9 L255.4 449.8 L256.3 451.1 L257.2 450.7 L258.0 449.1 L258.9 448.5 L259.8 448.7 L260.6 447.7 L261.5 447.9 L262.4 445.3 L263.4 442.7 L264.2 443.7 L265.0 444.0 L265.8 443.8 L266.6 444.7 L267.5 445.9 L268.3 445.8 L269.2 446.0 L270.0 445.5 L270.8 443.8 L271.5 444.1 L272.3 442.9 L273.1 442.7 L273.9 443.5 L274.7 443.6 L275.5 444.8 L276.3 444.7 L277.1 444.7 L277.8 444.8 L278.6 443.8 L279.3 444.1 L280.1 444.0 L280.8 443.4 L281.7 444.9 L282.5 444.9 L283.4 446.0 L284.6 445.3 L285.5 446.2 L286.3 446.4 L287.2 446.0 L288.5 437.6 L289.4 439.9 L290.4 441.5 L291.2 442.1 L292.0 441.8 L292.7 440.8 L293.5 440.5 L294.3 440.2 L295.1 440.2 L295.9 442.1 L296.7 442.9 L297.5 442.7 L298.3 442.5 L299.1 442.7 L299.9 442.6 L300.7 442.1 L301.6 442.3 L302.4 441.1 L303.3 441.5 L304.6 437.6 L305.5 438.5 L306.3 438.6 L307.2 438.9 L308.0 438.5 L308.9 437.4 L309.7 436.9 L310.6 436.5 L311.4 436.1 L312.3 435.0 L313.3 442.3 L314.3 449.2 L315.2 450.5 L316.2 451.1 L317.0 449.9 L317.8 449.8 L318.6 450.0 L319.4 449.8 L320.2 450.5 L321.0 450.1 L321.7 451.3 L322.5 451.6 L323.3 451.8 L324.1 451.0 L324.9 451.7 L325.6 451.3 L326.4 451.0 L327.2 451.8 L328.0 450.9 L328.7 451.0 L329.5 450.4 L330.2 450.2 L331.0 450.5 L332.0 450.6 L333.0 452.4 L333.6 449.2 L334.5 450.2 L335.3 451.1 L336.2 452.4 L337.0 451.8 L337.8 451.0 L338.6 449.5 L339.4 449.2 L340.2 450.4 L341.0 449.3 L341.8 450.5 L342.6 451.1 L343.5 450.9 L344.3 451.4 L345.2 451.8 L346.5 440.2 L347.4 441.2 L348.2 444.2 L349.1 445.3 L349.9 445.1 L350.7 444.5 L351.5 445.5 L352.3 445.3 L353.1 444.7 L353.9 445.7 L354.7 445.5 L355.5 446.0 L356.3 446.1 L357.2 446.8 L358.0 446.0 L358.8 446.2 L359.6 445.2 L360.4 445.6 L361.2 444.7 L362.0 445.6 L362.9 445.8 L363.7 446.0 L364.5 447.3 L365.3 446.8 L366.2 446.1 L367.0 445.3 L367.8 446.4 L368.6 446.8 L369.5 446.5 L370.3 446.6 L371.5 440.2 L372.5 441.2 L373.5 442.7 L374.4 442.8 L375.2 440.5 L376.1 440.8 L377.1 441.4 L378.0 443.4 L378.9 442.6 L379.9 441.5 L380.7 441.9 L381.5 441.3 L382.2 442.5 L383.0 443.2 L383.8 442.7 L384.7 442.5 L385.5 442.6 L386.4 442.7 L387.7 438.2 L388.5 437.7 L389.3 437.8 L390.1 439.1 L390.9 438.2 L391.9 436.4 L392.8 435.0 L393.8 437.4 L394.8 438.2 L396.1 436.3 L396.8 436.3 L397.5 436.3 L398.2 436.3 L398.9 436.3 L399.6 436.3 L400.4 436.3 L401.1 436.3 L401.8 436.3 L402.5 436.3 L403.2 436.3 L404.5 449.2 L405.3 449.8 L406.0 449.1 L406.8 448.3 L407.5 449.5 L408.3 448.5 L409.2 449.2 L410.0 449.7 L410.9 450.5 L411.8 449.5 L412.6 450.0 L413.5 448.5 L414.3 449.1 L415.1 449.4 L415.8 450.4 L416.6 450.5 L417.4 451.8 L418.2 451.6 L418.9 450.9 L419.7 450.2 L420.4 450.7 L421.2 449.8 L422.0 450.6 L422.8 449.4 L423.5 450.6 L424.3 450.4 L425.1 451.1 L425.9 451.4 L426.7 450.7 L427.5 449.2 L428.3 449.2 L429.1 449.2 L429.8 449.2 L430.6 449.2 L431.3 449.2 L432.1 449.2 L432.8 449.2 L433.6 449.2 L434.3 449.3 L435.1 451.2 L435.8 450.3 L436.6 451.1 L437.9 444.7 L438.8 445.5 L439.6 445.9 L440.5 446.6 L441.3 446.4 L442.2 445.9 L443.0 445.3 L443.8 445.9 L444.6 444.9 L445.3 446.2 L446.1 445.5 L446.9 446.0 L447.7 446.3 L448.5 446.2 L449.2 446.4 L450.0 447.1 L450.8 447.3 L451.6 447.1 L452.3 446.8 L453.1 447.3 L453.8 446.9 L454.6 446.6 L455.4 445.9 L456.2 446.4 L456.9 446.9 L457.7 447.9 L458.5 447.3 L459.3 448.0 L460.1 447.4 L460.9 446.4 L461.7 447.3 L463.0 442.1 L463.9 442.8 L464.7 442.4 L465.6 442.7 L466.5 442.4 L467.3 442.3 L468.2 441.5 L469.0 441.7 L469.8 441.5 L470.6 442.2 L471.4 441.5 L472.3 441.9 L473.1 442.6 L474.0 443.4 L474.8 443.9 L475.5 442.6 L476.2 442.7 L477.0 443.5 L477.8 442.0 L478.5 442.7 L479.5 441.1 L480.5 438.2 L481.4 438.3 L482.4 437.6 L483.3 437.9 L484.1 438.1 L485.0 438.9 L485.8 440.5 L486.7 441.8 L487.5 442.1 L488.5 446.0 L489.5 451.1 L490.4 451.7 L491.4 452.4 L492.2 452.0 L493.0 451.4 L493.8 450.7 L494.6 450.5 L495.4 450.1 L496.2 451.2 L496.9 451.8 L497.7 450.8 L498.5 451.8 L499.3 450.9 L500.1 451.6 L500.8 451.1 L501.6 450.5 L502.4 449.8 L503.2 449.3 L504.0 451.0 L504.7 451.9 L505.5 452.3 L506.3 451.8 L507.1 452.6 L508.0 451.9 L508.8 453.1 L509.8 452.1 L510.8 449.8 L511.7 449.6 L512.6 450.5 L513.5 451.2 L514.3 452.2 L515.2 451.8 L516.0 452.0 L516.7 450.9 L517.5 451.0 L518.2 452.0 L519.0 451.1 L519.9 447.3 L520.7 444.9 L521.6 441.5 L522.5 442.6 L523.3 443.4 L524.2 445.3 L525.1 445.8 L525.9 444.9 L526.8 446.0 L527.6 445.6 L528.3 446.3 L529.1 446.0 L529.8 446.2 L530.6 447.3 L531.4 447.6 L532.2 448.0 L532.9 448.3 L533.7 447.1 L534.5 447.9 L535.3 447.7 L536.1 447.3 L536.8 447.7 L537.6 447.4 L538.4 447.3 L539.7 446.0 L540.6 447.4 L541.4 447.0 L542.3 447.9 L543.1 446.6 L543.9 447.3 L544.7 445.8 L545.5 446.0 L546.1 439.5 L547.1 441.0 L548.1 442.1 L549.4 440.8 L550.3 442.8 L551.3 444.7 L552.6 440.8 L553.5 442.0 L554.3 441.8 L555.2 442.1 L556.0 442.6 L556.7 442.2 L557.5 443.0 L558.2 442.7 L559.0 443.4 L559.9 443.4 L560.7 442.6 L561.6 442.1 L562.5 439.3 L563.3 437.3 L564.2 435.6 L565.1 435.4 L565.9 436.0 L566.8 435.6 L567.8 434.4 L568.7 434.4 L570.0 430.5 L570.7 430.5 L571.5 430.5 L572.2 430.5 L572.9 430.5 L573.6 430.5 L574.4 430.5 L575.1 430.5 L575.8 430.5 L576.5 430.5 L577.3 430.5 L578.0 430.5" fill="none" stroke="#0000ff" stroke-width="1" stroke-linejoin="round"/><path d="M54.50 331.5 L54.50 308.3 L55.00 302.6 L55.50 308.3 L56.00 308.3 L56.50 308.3 L57.00 308.3 L57.50 308.3 L58.00 302.6 L58.50 308.3 L59.00 308.3 L59.50 308.3 L60.00 308.3 L60.50 308.3 L61.00 302.6 L61.50 308.3 L62.00 308.3 L62.50 308.3 L63.00 308.3 L63.50 308.3 L64.00 302.6 L64.50 308.3 L65.00 308.3 L65.50 308.3 L66.00 308.3 L66.50 302.6 L67.00 308.3 L67.50 308.3 L68.00 308.3 L68.50 308.3 L69.00 302.6 L69.50 308.3 L70.00 308.3 L70.50 308.3 L71.00 302.6 L71.50 296.8 L72.00 296.8 L72.50 302.6 L73.00 296.8 L73.50 296.8 L74.00 296.8 L74.50 302.6 L75.00 296.8 L75.50 296.8 L76.00 302.6 L76.50 296.8 L77.00 302.6 L77.50 302.6 L78.00 296.8 L78.50 296.8 L79.00 296.8 L79.50 302.6 L80.00 296.8 L80.50 296.8 L81.00 302.6 L81.50 302.6 L82.00 296.8 L82.50 302.6 L83.00 302.6 L83.50 296.8 L84.00 302.6 L84.50 296.8 L85.00 302.6 L85.50 296.8 L86.00 296.8 L86.50 302.6 L87.00 302.6 L87.50 296.8 L88.00 302.6 L88.50 291.0 L89.00 296.8 L89.50 296.8 L90.00 296.8 L90.50 296.8 L91.00 296.8 L91.50 296.8 L92.00 296.8 L92.50 291.0 L93.00 296.8 L93.50 296.8 L94.00 296.8 L94.50 296.8 L95.00 296.8 L95.50 296.8 L96.00 296.8 L96.50 291.0 L97.00 296.8 L97.50 296.8 L98.00 296.8 L98.50 296.8 L99.00 291.0 L99.50 296.8 L100.00 296.8 L100.50 296.8 L101.00 296.8 L101.50 296.8 L102.00 296.8 L102.50 291.0 L103.00 296.8 L103.50 296.8 L104.00 302.6 L104.50 296.8 L105.00 296.8 L105.50 302.6 L106.00 296.8 L106.50 296.8 L107.00 302.6 L107.50 302.6 L108.00 296.8 L108.50 296.8 L109.00 302.6 L109.50 302.6 L110.00 296.8 L110.50 296.8 L111.00 302.6 L111.50 296.8 L112.00 302.6 L112.50 302.6 L113.00 296.8 L113.50 302.6 L114.00 296.8 L114.50 296.8 L115.00 302.6 L115.50 296.8 L116.00 302.6 L116.50 302.6 L117.00 296.8 L117.50 296.8 L118.00 302.6 L118.50 296.8 L119.00 296.8 L119.50 302.6 L120.00 302.6 L120.50 296.8 L121.00 296.8 L121.50 308.3 L122.00 302.6 L122.50 308.3 L123.00 308.3 L123.50 308.3 L124.00 302.6 L124.50 308.3 L125.00 308.3 L125.50 308.3 L126.00 302.6 L126.50 308.3 L127.00 308.3 L127.50 308.3 L128.00 302.6 L128.50 308.3 L129.00 308.3 L129.50 308.3 L130.00 308.3 L130.50 308.3 L131.00 308.3 L131.50 302.6 L132.00 308.3 L132.50 308.3 L133.00 308.3 L133.50 308.3 L134.00 308.3 L134.50 308.3 L135.00 308.3 L135.50 308.3 L136.00 308.3 L136.50 308.3 L137.00 308.3 L137.50 314.1 L138.00 308.3 L138.50 308.3 L139.00 302.6 L139.50 308.3 L140.00 308.3 L140.50 308.3 L141.00 308.3 L141.50 308.3 L142.00 308.3 L142.50 308.3 L143.00 308.3 L143.50 308.3 L144.00 308.3 L144.50 308.3 L145.00 308.3 L145.50 308.3 L146.00 308.3 L146.50 308.3 L147.00 308.3 L147.50 308.3 L148.00 302.6 L148.50 308.3 L149.00 308.3 L149.50 308.3 L150.00 302.6 L150.50 308.3 L151.00 308.3 L151.50 308.3 L152.00 308.3 L152.50 302.6 L153.00 308.3 L153.50 308.3 L154.00 291.0 L154.50 302.6 L155.00 302.6 L155.50 302.6 L156.00 302.6 L156.50 296.8 L157.00 302.6 L157.50 302.6 L158.00 302.6 L158.50 302.6 L159.00 296.8 L159.50 302.6 L160.00 302.6 L160.50 302.6 L161.00 302.6 L161.50 296.8 L162.00 302.6 L162.50 302.6 L163.00 302.6 L163.50 302.6 L164.00 302.6 L164.50 296.8 L165.00 302.6 L165.50 302.6 L166.00 302.6 L166.50 302.6 L167.00 302.6 L167.50 302.6 L168.00 302.6 L168.50 302.6 L169.00 302.6 L169.50 302.6 L170.00 296.8 L170.50 296.8 L171.00 296.8 L171.50 296.8 L172.00 296.8 L172.50 296.8 L173.00 296.8 L173.50 291.0 L174.00 296.8 L174.50 291.0 L175.00 291.0 L175.50 291.0 L176.00 296.8 L176.50 291.0 L177.00 296.8 L177.50 296.8 L178.00 291.0 L178.50 296.8 L179.00 291.0 L179.50 291.0 L180.00 296.8 L180.50 291.0 L181.00 291.0 L181.50 291.0 L182.00 296.8 L182.50 291.0 L183.00 291.0 L183.50 291.0 L184.00 296.8 L184.50 291.0 L185.00 296.8 L185.50 296.8 L186.00 291.0 L186.50 291.0 L187.00 296.8 L187.50 296.8 L188.00 302.6 L188.50 296.8 L189.00 296.8 L189.50 302.6 L190.00 296.8 L190.50 302.6 L191.00 296.8 L191.50 296.8 L192.00 302.6 L192.50 296.8 L193.00 296.8 L193.50 296.8 L194.00 302.6 L194.50 296.8 L195.00 296.8 L195.50 302.6 L196.00 296.8 L196.50 302.6 L197.00 296.8 L197.50 302.6 L198.00 296.8 L198.50 296.8 L199.00 296.8 L199.50 302.6 L200.00 296.8 L200.50 296.8 L201.00 302.6 L201.50 296.8 L202.00 296.8 L202.50 302.6 L203.00 302.6 L203.50 302.6 L204.00 302.6 L204.50 308.3 L205.00 314.1 L205.50 308.3 L206.00 308.3 L206.50 308.3 L207.00 314.1 L207.50 314.1 L208.00 308.3 L208.50 314.1 L209.00 308.3 L209.50 308.3 L210.00 308.3 L210.50 314.1 L211.00 308.3 L211.50 308.3 L212.00 308.3 L212.50 308.3 L213.00 308.3 L213.50 308.3 L214.00 308.3 L214.50 308.3 L215.00 308.3 L215.50 302.6 L216.00 308.3 L216.50 308.3 L217.00 308.3 L217.50 308.3 L218.00 308.3 L218.50 308.3 L219.00 308.3 L219.50 308.3 L220.00 308.3 L220.50 308.3 L221.00 308.3 L221.50 308.3 L222.00 308.3 L222.50 308.3 L223.00 308.3 L223.50 308.3 L224.00 308.3 L224.50 308.3 L225.00 308.3 L225.50 308.3 L226.00 308.3 L226.50 308.3 L227.00 308.3 L227.50 308.3 L228.00 308.3 L228.50 308.3 L229.00 331.5 L229.50 308.3 L230.00 308.3 L230.50 314.1 L231.00 308.3 L231.50 308.3 L232.00 302.6 L232.50 308.3 L233.00 308.3 L233.50 308.3 L234.00 308.3 L234.50 308.3 L235.00 308.3 L235.50 308.3 L236.00 308.3 L236.50 308.3 L237.00 308.3 L237.50 308.3 L238.00 308.3 L238.50 302.6 L239.00 308.3 L239.50 308.3 L240.00 308.3 L240.50 308.3 L241.00 308.3 L241.50 308.3 L242.00 308.3 L242.50 308.3 L243.00 308.3 L243.50 308.3 L244.00 308.3 L244.50 308.3 L245.00 308.3 L245.50 308.3 L246.00 308.3 L246.50 308.3 L247.00 308.3 L247.50 308.3 L248.00 308.3 L248.50 308.3 L249.00 308.3 L249.50 308.3 L250.00 308.3 L250.50 314.1 L251.00 308.3 L251.50 308.3 L252.00 314.1 L252.50 308.3 L253.00 308.3 L253.50 308.3 L254.00 308.3 L254.50 308.3 L255.00 308.3 L255.50 308.3 L256.00 308.3 L256.50 308.3 L257.00 308.3 L257.50 314.1 L258.00 308.3 L258.50 308.3 L259.00 308.3 L259.50 308.3 L260.00 308.3 L260.50 308.3 L261.00 308.3 L261.50 308.3 L262.00 308.3 L262.50 308.3 L263.00 302.6 L263.50 302.6 L264.00 302.6 L264.50 302.6 L265.00 302.6 L265.50 302.6 L266.00 302.6 L266.50 296.8 L267.00 302.6 L267.50 302.6 L268.00 302.6 L268.50 296.8 L269.00 302.6 L269.50 302.6 L270.00 296.8 L270.50 302.6 L271.00 302.6 L271.50 296.8 L272.00 302.6 L272.50 302.6 L273.00 296.8 L273.50 302.6 L274.00 302.6 L274.50 296.8 L275.00 302.6 L275.50 302.6 L276.00 296.8 L276.50 302.6 L277.00 302.6 L277.50 302.6 L278.00 296.8 L278.50 302.6 L279.00 302.6 L279.50 302.6 L280.00 296.8 L280.50 302.6 L281.00 302.6 L281.50 302.6 L282.00 296.8 L282.50 302.6 L283.00 296.8 L283.50 296.8 L284.00 296.8 L284.50 302.6 L285.00 296.8 L285.50 296.8 L286.00 296.8 L286.50 296.8 L287.00 296.8 L287.50 296.8 L288.00 291.0 L288.50 296.8 L289.00 296.8 L289.50 291.0 L290.00 296.8 L290.50 296.8 L291.00 296.8 L291.50 291.0 L292.00 296.8 L292.50 296.8 L293.00 296.8 L293.50 296.8 L294.00 296.8 L294.50 296.8 L295.00 296.8 L295.50 296.8 L296.00 296.8 L296.50 296.8 L297.00 296.8 L297.50 291.0 L298.00 296.8 L298.50 296.8 L299.00 296.8 L299.50 291.0 L300.00 296.8 L300.50 296.8 L301.00 296.8 L301.50 291.0 L302.00 296.8 L302.50 296.8 L303.00 291.0 L303.50 296.8 L304.00 291.0 L304.50 291.0 L305.00 291.0 L305.50 291.0 L306.00 291.0 L306.50 291.0 L307.00 291.0 L307.50 291.0 L308.00 291.0 L308.50 291.0 L309.00 291.0 L309.50 291.0 L310.00 291.0 L310.50 291.0 L311.00 291.0 L311.50 291.0 L312.00 291.0 L312.50 285.2 L313.00 308.3 L313.50 308.3 L314.00 308.3 L314.50 308.3 L315.00 308.3 L315.50 308.3 L316.00 308.3 L316.50 308.3 L317.00 302.6 L317.50 308.3 L318.00 308.3 L318.50 308.3 L319.00 308.3 L319.50 308.3 L320.00 308.3 L320.50 308.3 L321.00 308.3 L321.50 308.3 L322.00 314.1 L322.50 308.3 L323.00 308.3 L323.50 308.3 L324.00 308.3 L324.50 308.3 L325.00 308.3 L325.50 308.3 L326.00 308.3 L326.50 308.3 L327.00 308.3 L327.50 308.3 L328.00 308.3 L328.50 308.3 L329.00 314.1 L329.50 308.3 L330.00 308.3 L330.50 308.3 L331.00 308.3 L331.50 308.3 L332.00 308.3 L332.50 308.3 L333.00 308.3 L333.50 308.3 L334.00 308.3 L334.50 308.3 L335.00 302.6 L335.50 308.3 L336.00 308.3 L336.50 308.3 L337.00 308.3 L337.50 308.3 L338.00 308.3 L338.50 308.3 L339.00 308.3 L339.50 302.6 L340.00 308.3 L340.50 308.3 L341.00 308.3 L341.50 308.3 L342.00 314.1 L342.50 308.3 L343.00 308.3 L343.50 308.3 L344.00 308.3 L344.50 308.3 L345.00 308.3 L345.50 302.6 L346.00 296.8 L346.50 296.8 L347.00 296.8 L347.50 302.6 L348.00 296.8 L348.50 302.6 L349.00 296.8 L349.50 296.8 L350.00 302.6 L350.50 296.8 L351.00 296.8 L351.50 302.6 L352.00 296.8 L352.50 296.8 L353.00 296.8 L353.50 302.6 L354.00 302.6 L354.50 296.8 L355.00 302.6 L355.50 296.8 L356.00 296.8 L356.50 302.6 L357.00 296.8 L357.50 296.8 L358.00 296.8 L358.50 302.6 L359.00 296.8 L359.50 302.6 L360.00 302.6 L360.50 296.8 L361.00 296.8 L361.50 302.6 L362.00 296.8 L362.50 296.8 L363.00 296.8 L363.50 302.6 L364.00 296.8 L364.50 302.6 L365.00 296.8 L365.50 296.8 L366.00 302.6 L366.50 302.6 L367.00 296.8 L367.50 296.8 L368.00 302.6 L368.50 296.8 L369.00 296.8 L369.50 302.6 L370.00 296.8 L370.50 296.8 L371.00 291.0 L371.50 296.8 L372.00 296.8 L372.50 291.0 L373.00 296.8 L373.50 296.8 L374.00 291.0 L374.50 296.8 L375.00 296.8 L375.50 296.8 L376.00 296.8 L376.50 296.8 L377.00 296.8 L377.50 296.8 L378.00 296.8 L378.50 296.8 L379.00 296.8 L379.50 296.8 L380.00 291.0 L380.50 296.8 L381.00 296.8 L381.50 291.0 L382.00 296.8 L382.50 296.8 L383.00 291.0 L383.50 296.8 L384.00 296.8 L384.50 291.0 L385.00 296.8 L385.50 296.8 L386.00 296.8 L386.50 291.0 L387.00 296.8 L387.50 296.8 L388.00 291.0 L388.50 291.0 L389.00 291.0 L389.50 291.0 L390.00 291.0 L390.50 291.0 L391.00 291.0 L391.50 291.0 L392.00 291.0 L392.50 291.0 L393.00 291.0 L393.50 291.0 L394.00 291.0 L394.50 291.0 L395.00 291.0 L395.50 291.0 L396.00 291.0 L396.50 291.0 L397.00 291.0 L397.50 291.0 L398.00 291.0 L398.50 291.0 L399.00 291.0 L399.50 291.0 L400.00 291.0 L400.50 291.0 L401.00 291.0 L401.50 291.0 L402.00 291.0 L402.50 291.0 L403.00 291.0 L403.50 331.5 L404.00 308.3 L404.50 331.5 L405.00 308.3 L405.50 302.6 L406.00 308.3 L406.50 308.3 L407.00 302.6 L407.50 308.3 L408.00 308.3 L408.50 308.3 L409.00 308.3 L409.50 302.6 L410.00 308.3 L410.50 308.3 L411.00 308.3 L411.50 308.3 L412.00 308.3 L412.50 308.3 L413.00 308.3 L413.50 302.6 L414.00 308.3 L414.50 314.1 L415.00 308.3 L415.50 314.1 L416.00 308.3 L416.50 314.1 L417.00 308.3 L417.50 314.1 L418.00 308.3 L418.50 314.1 L419.00 308.3 L419.50 308.3 L420.00 308.3 L420.50 308.3 L421.00 314.1 L421.50 308.3 L422.00 308.3 L422.50 308.3 L423.00 308.3 L423.50 308.3 L424.00 308.3 L424.50 308.3 L425.00 308.3 L425.50 308.3 L426.00 308.3 L426.50 308.3 L427.00 308.3 L427.50 308.3 L428.00 308.3 L428.50 314.1 L429.00 308.3 L429.50 308.3 L430.00 308.3 L430.50 308.3 L431.00 308.3 L431.50 308.3 L432.00 308.3 L432.50 308.3 L433.00 302.6 L433.50 308.3 L434.00 308.3 L434.50 308.3 L435.00 308.3 L435.50 308.3 L436.00 308.3 L436.50 308.3 L437.00 302.6 L437.50 302.6 L438.00 296.8 L438.50 296.8 L439.00 302.6 L439.50 302.6 L440.00 296.8 L440.50 296.8 L441.00 296.8 L441.50 302.6 L442.00 302.6 L442.50 296.8 L443.00 296.8 L443.50 302.6 L444.00 296.8 L444.50 296.8 L445.00 302.6 L445.50 302.6 L446.00 296.8 L446.50 296.8 L447.00 302.6 L447.50 296.8 L448.00 296.8 L448.50 302.6 L449.00 302.6 L449.50 296.8 L450.00 296.8 L450.50 302.6 L451.00 302.6 L451.50 296.8 L452.00 296.8 L452.50 302.6 L453.00 296.8 L453.50 296.8 L454.00 302.6 L454.50 302.6 L455.00 296.8 L455.50 296.8 L456.00 296.8 L456.50 302.6 L457.00 296.8 L457.50 302.6 L458.00 296.8 L458.50 302.6 L459.00 296.8 L459.50 302.6 L460.00 296.8 L460.50 296.8 L461.00 302.6 L461.50 296.8 L462.00 296.8 L462.50 296.8 L463.00 296.8 L463.50 296.8 L464.00 296.8 L464.50 296.8 L465.00 296.8 L465.50 296.8 L466.00 296.8 L466.50 291.0 L467.00 296.8 L467.50 291.0 L468.00 296.8 L468.50 296.8 L469.00 291.0 L469.50 296.8 L470.00 296.8 L470.50 296.8 L471.00 291.0 L471.50 296.8 L472.00 291.0 L472.50 296.8 L473.00 296.8 L473.50 296.8 L474.00 296.8 L474.50 296.8 L475.00 296.8 L475.50 296.8 L476.00 296.8 L476.50 296.8 L477.00 296.8 L477.50 296.8 L478.00 296.8 L478.50 296.8 L479.00 296.8 L479.50 296.8 L480.00 291.0 L480.50 291.0 L481.00 291.0 L481.50 291.0 L482.00 291.0 L482.50 285.2 L483.00 291.0 L483.50 291.0 L484.00 291.0 L484.50 291.0 L485.00 291.0 L485.50 291.0 L486.00 291.0 L486.50 291.0 L487.00 291.0 L487.50 308.3 L488.00 308.3 L488.50 308.3 L489.00 308.3 L489.50 308.3 L490.00 308.3 L490.50 308.3 L491.00 308.3 L491.50 308.3 L492.00 308.3 L492.50 308.3 L493.00 308.3 L493.50 308.3 L494.00 308.3 L494.50 314.1 L495.00 308.3 L495.50 314.1 L496.00 314.1 L496.50 308.3 L497.00 314.1 L497.50 314.1 L498.00 314.1 L498.50 308.3 L499.00 314.1 L499.50 314.1 L500.00 308.3 L500.50 308.3 L501.00 314.1 L501.50 308.3 L502.00 314.1 L502.50 314.1 L503.00 308.3 L503.50 314.1 L504.00 308.3 L504.50 314.1 L505.00 314.1 L505.50 308.3 L506.00 314.1 L506.50 308.3 L507.00 314.1 L507.50 314.1 L508.00 308.3 L508.50 314.1 L509.00 314.1 L509.50 314.1 L510.00 308.3 L510.50 314.1 L511.00 308.3 L511.50 314.1 L512.00 314.1 L512.50 308.3 L513.00 314.1 L513.50 314.1 L514.00 308.3 L514.50 308.3 L515.00 314.1 L515.50 314.1 L516.00 308.3 L516.50 314.1 L517.00 314.1 L517.50 308.3 L518.00 314.1 L518.50 314.1 L519.00 314.1 L519.50 308.3 L520.00 314.1 L520.50 302.6 L521.00 296.8 L521.50 302.6 L522.00 296.8 L522.50 296.8 L523.00 296.8 L523.50 302.6 L524.00 296.8 L524.50 296.8 L525.00 302.6 L525.50 296.8 L526.00 302.6 L526.50 302.6 L527.00 296.8 L527.50 302.6 L528.00 296.8 L528.50 302.6 L529.00 302.6 L529.50 296.8 L530.00 296.8 L530.50 302.6 L531.00 296.8 L531.50 296.8 L532.00 302.6 L532.50 296.8 L533.00 302.6 L533.50 296.8 L534.00 296.8 L534.50 302.6 L535.00 302.6 L535.50 296.8 L536.00 302.6 L536.50 302.6 L537.00 302.6 L537.50 302.6 L538.00 296.8 L538.50 302.6 L539.00 302.6 L539.50 302.6 L540.00 302.6 L540.50 302.6 L541.00 302.6 L541.50 302.6 L542.00 302.6 L542.50 302.6 L543.00 302.6 L543.50 302.6 L544.00 302.6 L544.50 302.6 L545.00 302.6 L545.50 296.8 L546.00 291.0 L546.50 291.0 L547.00 296.8 L547.50 291.0 L548.00 291.0 L548.50 296.8 L549.00 291.0 L549.50 291.0 L550.00 291.0 L550.50 296.8 L551.00 291.0 L551.50 291.0 L552.00 291.0 L552.50 296.8 L553.00 291.0 L553.50 291.0 L554.00 291.0 L554.50 296.8 L555.00 296.8 L555.50 291.0 L556.00 296.8 L556.50 296.8 L557.00 291.0 L557.50 291.0 L558.00 291.0 L558.50 296.8 L559.00 296.8 L559.50 296.8 L560.00 296.8 L560.50 296.8 L561.00 296.8 L561.50 296.8 L562.00 296.8 L562.50 296.8 L563.00 291.0 L563.50 291.0 L564.00 291.0 L564.50 291.0 L565.00 291.0 L565.50 291.0 L566.00 291.0 L566.50 291.0 L567.00 291.0 L567.50 291.0 L568.00 291.0 L568.50 291.0 L569.00 291.0 L569.50 285.2 L570.00 285.2 L570.50 285.2 L571.00 285.2 L571.50 285.2 L572.00 285.2 L572.50 285.2 L573.00 285.2 L573.50 285.2 L574.00 285.2 L574.50 285.2 L575.00 285.2 L575.50 285.2 L576.00 285.2 L576.50 285.2 L577.00 285.2 L577.50 285.2 L578.00 285.2 L578.50 285.2" fill="none" stroke="#0000ff" stroke-width="1" stroke-linejoin="miter" stroke-miterlimit="2"/><path d="M54.1 31.0v3.5M54.1 181.0v-3.5 M54.1 181.0v3.5M54.1 331.0v-3.5 M54.1 331.0v3.5M54.1 481.0v-3.5 M95.7 31.0v3.5M95.7 181.0v-3.5 M95.7 181.0v3.5M95.7 331.0v-3.5 M95.7 331.0v3.5M95.7 481.0v-3.5 M137.3 31.0v3.5M137.3 181.0v-3.5 M137.3 181.0v3.5M137.3 331.0v-3.5 M137.3 331.0v3.5M137.3 481.0v-3.5 M178.9 31.0v3.5M178.9 181.0v-3.5 M178.9 181.0v3.5M178.9 331.0v-3.5 M178.9 331.0v3.5M178.9 481.0v-3.5 M220.6 31.0v3.5M220.6 181.0v-3.5 M220.6 181.0v3.5M220.6 331.0v-3.5 M220.6 331.0v3.5M220.6 481.0v-3.5 M262.2 31.0v3.5M262.2 181.0v-3.5 M262.2 181.0v3.5M262.2 331.0v-3.5 M262.2 331.0v3.5M262.2 481.0v-3.5 M303.8 31.0v3.5M303.8 181.0v-3.5 M303.8 181.0v3.5M303.8 331.0v-3.5 M303.8 331.0v3.5M303.8 481.0v-3.5 M345.4 31.0v3.5M345.4 181.0v-3.5 M345.4 181.0v3.5M345.4 331.0v-3.5 M345.4 331.0v3.5M345.4 481.0v-3.5 M387.0 31.0v3.5M387.0 181.0v-3.5 M387.0 181.0v3.5M387.0 331.0v-3.5 M387.0 331.0v3.5M387.0 481.0v-3.5 M428.6 31.0v3.5M428.6 181.0v-3.5 M428.6 181.0v3.5M428.6 331.0v-3.5 M428.6 331.0v3.5M428.6 481.0v-3.5 M470.3 31.0v3.5M470.3 181.0v-3.5 M470.3 181.0v3.5M470.3 331.0v-3.5 M470.3 331.0v3.5M470.3 481.0v-3.5 M511.9 31.0v3.5M511.9 181.0v-3.5 M511.9 181.0v3.5M511.9 331.0v-3.5 M511.9 331.0v3.5M511.9 481.0v-3.5 M553.5 31.0v3.5M553.5 181.0v-3.5 M553.5 181.0v3.5M553.5 331.0v-3.5 M553.5 331.0v3.5M553.5 481.0v-3.5 M54.5 166.0h3.5 M54.5 151.0h3.5 M54.5 136.0h3.5 M54.5 121.0h3.5 M54.5 106.0h3.5 M54.5 91.0h3.5 M54.5 76.0h3.5 M54.5 61.0h3.5 M578.5 43.5h-3.5 M578.5 56.0h-3.5 M578.5 68.5h-3.5 M578.5 81.0h-3.5 M578.5 93.5h-3.5 M578.5 106.0h-3.5 M578.5 118.5h-3.5 M578.5 131.0h-3.5 M578.5 143.5h-3.5 M578.5 156.0h-3.5 M578.5 168.5h-3.5 M54.5 319.9h3.5M578.5 319.9h-3.5 M54.5 308.3h3.5M578.5 308.3h-3.5 M54.5 296.8h3.5M578.5 296.8h-3.5 M54.5 285.2h3.5M578.5 285.2h-3.5 M54.5 273.6h3.5M578.5 273.6h-3.5 M54.5 262.0h3.5M578.5 262.0h-3.5 M54.5 250.5h3.5M578.5 250.5h-3.5 M54.5 238.9h3.5M578.5 238.9h-3.5 M54.5 227.3h3.5M578.5 227.3h-3.5 M54.5 215.7h3.5M578.5 215.7h-3.5 M54.5 204.2h3.5M578.5 204.2h-3.5 M54.5 192.6h3.5M578.5 192.6h-3.5 M54.5 462.8h3.5M578.5 462.8h-3.5 M54.5 444.0h3.5M578.5 444.0h-3.5 M54.5 425.2h3.5M578.5 425.2h-3.5 M54.5 406.5h3.5M578.5 406.5h-3.5 M54.5 387.8h3.5M578.5 387.8h-3.5 M54.5 369.0h3.5M578.5 369.0h-3.5" stroke="#222" stroke-width="0.5" fill="none"/><path d="M54.5 31H578.5V481.8H54.5Z M54.5 181H578.5 M54.5 331.5H578.5" fill="none" stroke="#000" stroke-width="1"/><g fill="#000" stroke="#000" stroke-width="0.18" font-family='"Liberation Sans", sans-serif'><text transform="translate(317.00,26.70) scale(1,1)" text-anchor="middle" font-size="11.3" >Input File:&#160; sled_2016-04-17T14-03-47.strokes.csv --- HR / Pace / Rate / Power</text><text transform="translate(52.50,169.70) scale(0.94,1)" text-anchor="end" font-size="10" >110</text><text transform="translate(52.50,154.70) scale(0.94,1)" text-anchor="end" font-size="10" >120</text><text transform="translate(52.50,139.70) scale(0.94,1)" text-anchor="end" font-size="10" >130</text><text transform="translate(52.50,124.70) scale(0.94,1)" text-anchor="end" font-size="10" >140</text><text transform="translate(52.50,109.70) scale(0.94,1)" text-anchor="end" font-size="10" >150</text><text transform="translate(52.50,94.70) scale(0.94,1)" text-anchor="end" font-size="10" >160</text><text transform="translate(52.50,79.70) scale(0.94,1)" text-anchor="end" font-size="10" >170</text><text transform="translate(52.50,64.70) scale(0.94,1)" text-anchor="end" font-size="10" >180</text><text transform="translate(581.50,47.20) scale(0.94,1)" text-anchor="start" font-size="10" >1:35</text><text transform="translate(581.50,59.70) scale(0.94,1)" text-anchor="start" font-size="10" >1:40</text><text transform="translate(581.50,72.20) scale(0.94,1)" text-anchor="start" font-size="10" >1:45</text><text transform="translate(581.50,84.70) scale(0.94,1)" text-anchor="start" font-size="10" >1:50</text><text transform="translate(581.50,97.20) scale(0.94,1)" text-anchor="start" font-size="10" >1:55</text><text transform="translate(581.50,109.70) scale(0.94,1)" text-anchor="start" font-size="10" >2:00</text><text transform="translate(581.50,122.20) scale(0.94,1)" text-anchor="start" font-size="10" >2:05</text><text transform="translate(581.50,134.70) scale(0.94,1)" text-anchor="start" font-size="10" >2:10</text><text transform="translate(581.50,147.20) scale(0.94,1)" text-anchor="start" font-size="10" >2:15</text><text transform="translate(581.50,159.70) scale(0.94,1)" text-anchor="start" font-size="10" >2:20</text><text transform="translate(581.50,172.20) scale(0.94,1)" text-anchor="start" font-size="10" >2:25</text><text transform="translate(52.50,323.62) scale(0.94,1)" text-anchor="end" font-size="10" >16</text><text transform="translate(52.50,312.05) scale(0.94,1)" text-anchor="end" font-size="10" >18</text><text transform="translate(52.50,300.47) scale(0.94,1)" text-anchor="end" font-size="10" >20</text><text transform="translate(52.50,288.89) scale(0.94,1)" text-anchor="end" font-size="10" >22</text><text transform="translate(52.50,277.32) scale(0.94,1)" text-anchor="end" font-size="10" >24</text><text transform="translate(52.50,265.74) scale(0.94,1)" text-anchor="end" font-size="10" >26</text><text transform="translate(52.50,254.16) scale(0.94,1)" text-anchor="end" font-size="10" >28</text><text transform="translate(52.50,242.58) scale(0.94,1)" text-anchor="end" font-size="10" >30</text><text transform="translate(52.50,231.01) scale(0.94,1)" text-anchor="end" font-size="10" >32</text><text transform="translate(52.50,219.43) scale(0.94,1)" text-anchor="end" font-size="10" >34</text><text transform="translate(52.50,207.85) scale(0.94,1)" text-anchor="end" font-size="10" >36</text><text transform="translate(52.50,196.28) scale(0.94,1)" text-anchor="end" font-size="10" >38</text><text transform="translate(52.50,466.45) scale(0.94,1)" text-anchor="end" font-size="10" >150</text><text transform="translate(52.50,447.70) scale(0.94,1)" text-anchor="end" font-size="10" >200</text><text transform="translate(52.50,428.95) scale(0.94,1)" text-anchor="end" font-size="10" >250</text><text transform="translate(52.50,410.20) scale(0.94,1)" text-anchor="end" font-size="10" >300</text><text transform="translate(52.50,391.45) scale(0.94,1)" text-anchor="end" font-size="10" >350</text><text transform="translate(52.50,372.70) scale(0.94,1)" text-anchor="end" font-size="10" >400</text><text transform="translate(54.50,492.80) scale(0.94,1)" text-anchor="middle" font-size="10" >0:00</text><text transform="translate(96.12,492.80) scale(0.94,1)" text-anchor="middle" font-size="10" >0:05</text><text transform="translate(137.73,492.80) scale(0.94,1)" text-anchor="middle" font-size="10" >0:10</text><text transform="translate(179.34,492.80) scale(0.94,1)" text-anchor="middle" font-size="10" >0:15</text><text transform="translate(220.96,492.80) scale(0.94,1)" text-anchor="middle" font-size="10" >0:20</text><text transform="translate(262.57,492.80) scale(0.94,1)" text-anchor="middle" font-size="10" >0:25</text><text transform="translate(304.19,492.80) scale(0.94,1)" text-anchor="middle" font-size="10" >0:30</text><text transform="translate(345.81,492.80) scale(0.94,1)" text-anchor="middle" font-size="10" >0:35</text><text transform="translate(387.42,492.80) scale(0.94,1)" text-anchor="middle" font-size="10" >0:40</text><text transform="translate(429.04,492.80) scale(0.94,1)" text-anchor="middle" font-size="10" >0:45</text><text transform="translate(470.65,492.80) scale(0.94,1)" text-anchor="middle" font-size="10" >0:50</text><text transform="translate(512.27,492.80) scale(0.94,1)" text-anchor="middle" font-size="10" >0:55</text><text transform="translate(553.88,492.80) scale(0.94,1)" text-anchor="middle" font-size="10" >1:00</text><text transform="translate(316.50,505.00) scale(0.94,1)" text-anchor="middle" font-size="10" >Time (h:m)</text><text transform="translate(31.5,106) rotate(-90)" text-anchor="middle" font-size="10">BPM</text><text transform="translate(35.6,256) rotate(-90)" text-anchor="middle" font-size="10">SPM</text><text transform="translate(31.5,406) rotate(-90)" text-anchor="middle" font-size="10">Watts</text><text transform="translate(611,104.5) rotate(-90) scale(0.89,1)" text-anchor="middle" font-size="9.8">(sec/500)</text><text transform="translate(63.00,43.20) scale(0.94,1)" text-anchor="start" font-size="10" >Drag Factor: 130</text></g></svg></body></html>
